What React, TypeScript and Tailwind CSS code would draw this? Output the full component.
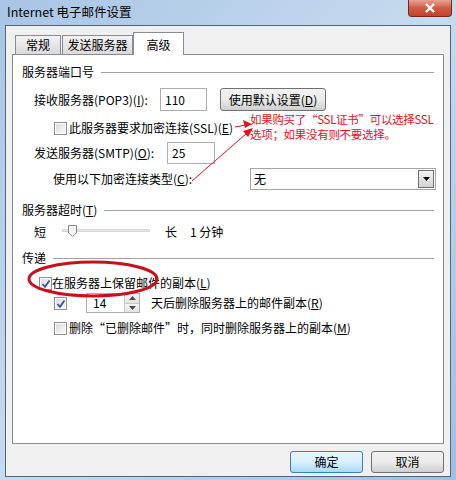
import React from 'react';

const font = { fontFamily: '"Segoe UI", "Noto Sans CJK SC", "Noto Sans", sans-serif' };

function CheckBox({ checked = false }: { checked?: boolean }) {
  return (
    <span className="relative inline-flex h-[13px] w-[13px] shrink-0 items-center justify-center border border-[#8f8f8f] bg-white">
      <span className="h-[9px] w-[9px] bg-gradient-to-br from-[#dcdcdc] to-[#fafafa]" />
      {checked && (
        <svg className="absolute left-[1px] top-[1px]" width="10" height="10" viewBox="0 0 10 10">
          <path d="M1.5 5 L4 7.8 L8.5 1.5" fill="none" stroke="#3b4ea8" strokeWidth="1.8" />
        </svg>
      )}
    </span>
  );
}

function SectionHeader({ label }: { label: React.ReactNode }) {
  return (
    <div className="flex h-[18px] items-center gap-[7px] pr-[9px]">
      <span className="whitespace-nowrap">{label}</span>
      <div className="h-px flex-1 bg-[#a0a0a0]" />
    </div>
  );
}

function Tab({ label, active = false }: { label: string; active?: boolean }) {
  return active ? (
    <div className="relative z-10 -mb-px flex h-[23px] items-start justify-center whitespace-nowrap border border-b-0 border-[#898c95] bg-white pt-[3px]">
      {label}
    </div>
  ) : (
    <div className="flex h-[19px] items-center justify-center whitespace-nowrap border border-b-0 border-[#898c95] bg-gradient-to-b from-[#f3f3f3] to-[#dadada]">
      {label}
    </div>
  );
}

export default function App() {
  return (
    <div
      className="relative flex h-[480px] w-[456px] flex-col overflow-hidden bg-gradient-to-br from-[#a9c5e4] via-[#c6dbef] to-[#9ec0e2] text-[12px] text-black"
      style={font}
    >
      {/* Title bar */}
      <div className="flex h-[25px] shrink-0 items-start justify-between pl-[7px]">
        <span className="pt-[3px] text-[12.5px]">Internet 电子邮件设置</span>
        <div className="mr-[4px] flex h-[17px] w-[44px] items-center justify-center rounded-b-[4px] border border-t-0 border-[#6b2a22] bg-gradient-to-b from-[#e9a293] via-[#cf5a43] to-[#c4432c]">
          <svg width="12" height="10" viewBox="0 0 12 10">
            <path d="M2 1 L10 9 M10 1 L2 9" stroke="white" strokeWidth="2.4" />
          </svg>
        </div>
      </div>

      {/* Client */}
      <div className="mx-[5px] mb-[3px] flex flex-1 flex-col border border-[#4f6680] bg-[#f0f0f0] px-[6px] pb-[3px] pt-[6px]">
        {/* Tabs */}
        <div className="flex items-end pl-[3px]">
          <div className="flex items-end gap-[1px]">
            <div className="w-[46px]"><Tab label="常规" /></div>
            <div className="w-[71px]"><Tab label="发送服务器" /></div>
          </div>
          <div className="w-[51px]"><Tab label="高级" active /></div>
        </div>

        {/* Panel */}
        <div className="flex h-[390px] flex-col border border-[#898c95] bg-white pl-[9px] pt-[8px]">
          <SectionHeader label="服务器端口号" />

          <div className="mt-[7px] flex h-[23px] items-center">
            <span className="w-[138px] pl-[12px]">
              接收服务器(POP3)(<u>I</u>):
            </span>
            <div className="flex h-[23px] w-[47px] items-center border border-[#abadb3] pl-[4px]">110</div>
            <button className="ml-[13px] flex h-[23px] w-[106px] items-center justify-center rounded-[3px] border border-[#707070] bg-gradient-to-b from-[#f2f2f2] via-[#ebebeb] to-[#cfcfcf]">
              使用默认设置(<u>D</u>)
            </button>
          </div>

          <div className="mt-[9px] flex h-[16px] items-center gap-[2px] pl-[32px]">
            <CheckBox />
            <span>此服务器要求加密连接(SSL)(<u>E</u>)</span>
          </div>

          <div className="mt-[6px] flex h-[22px] items-center">
            <span className="w-[145px] pl-[12px]">
              发送服务器(SMTP)(<u>O</u>):
            </span>
            <div className="flex h-[22px] w-[48px] items-center border border-[#abadb3] pl-[4px]">25</div>
          </div>

          <div className="mt-[4px] flex h-[22px] items-center">
            <span className="w-[228px] pl-[31px]">
              使用以下加密连接类型(<u>C</u>):
            </span>
            <div className="flex h-[22px] w-[186px] items-center justify-between border border-[#a5a5a5] pl-[3px] pr-[1px]">
              <span>无</span>
              <div className="flex h-[18px] w-[16px] items-center justify-center border border-[#707070] bg-gradient-to-b from-[#f2f2f2] to-[#d4d4d4]">
                <svg width="7" height="4" viewBox="0 0 7 4">
                  <path d="M0 0 H7 L3.5 4 Z" fill="#000" />
                </svg>
              </div>
            </div>
          </div>

          <div className="mt-[11px]">
            <SectionHeader label={<>服务器超时(<u>T</u>)</>} />
          </div>

          <div className="mt-[4px] flex h-[18px] items-center">
            <span className="w-[40px] pl-[12px]">短</span>
            <div className="relative h-[18px] w-[88px]">
              <div className="absolute left-0 right-0 top-[6px] h-[3px] border border-[#d6d6d6] bg-[#e7e7e7]" />
              <svg className="absolute left-[6px] top-[2px]" width="9" height="12" viewBox="0 0 9 12">
                <path d="M0.5 0.5 H8.5 V8 L4.5 11.5 L0.5 8 Z" fill="#f4f4f4" stroke="#8a8a8a" />
              </svg>
            </div>
            <span className="ml-[15px]">长</span>
            <span className="ml-[13px]">1 分钟</span>
          </div>

          <div className="mt-[8px]">
            <SectionHeader label="传递" />
          </div>

          <div className="mt-[7px] flex h-[18px] items-center pl-[17px]">
            <CheckBox checked />
            <span>在服务器上保留邮件的副本(<u>L</u>)</span>
          </div>

          <div className="mt-[1px] flex h-[20px] items-center pl-[32px]">
            <CheckBox checked />
            <div className="ml-[19px] flex h-[20px] w-[54px] items-center justify-between border border-[#abadb3] pl-[6px]">
              <span>14</span>
              <div className="flex h-[18px] w-[15px] flex-col border-l border-[#c8c8c8]">
                <div className="flex flex-1 items-center justify-center bg-gradient-to-b from-[#f7f7f7] to-[#e2e2e2]">
                  <svg width="7" height="4" viewBox="0 0 7 4"><path d="M0 4 H7 L3.5 0 Z" fill="#4a4a4a" /></svg>
                </div>
                <div className="flex flex-1 items-center justify-center border-t border-[#c8c8c8] bg-gradient-to-b from-[#f7f7f7] to-[#e2e2e2]">
                  <svg width="7" height="4" viewBox="0 0 7 4"><path d="M0 0 H7 L3.5 4 Z" fill="#4a4a4a" /></svg>
                </div>
              </div>
            </div>
            <span className="ml-[11px]">天后删除服务器上的邮件副本(<u>R</u>)</span>
          </div>

          <div className="mt-[6px] flex h-[18px] items-center gap-[2px] pl-[32px]">
            <CheckBox />
            <span>删除“已删除邮件”时，同时删除服务器上的副本(<u>M</u>)</span>
          </div>
        </div>

        {/* Buttons */}
        <div className="mt-[7px] flex justify-end gap-[8px]">
          <button className="flex h-[22px] w-[73px] items-center justify-center rounded-[3px] border border-[#3c7fb1] bg-gradient-to-b from-[#eaf6fd] via-[#d9f0fc] to-[#a7d9f5]">
            确定
          </button>
          <button className="flex h-[22px] w-[73px] items-center justify-center rounded-[3px] border border-[#707070] bg-gradient-to-b from-[#f2f2f2] via-[#ebebeb] to-[#cfcfcf]">
            取消
          </button>
        </div>
      </div>

      {/* Red annotation overlay */}
      <div className="absolute left-[250px] top-[112px] whitespace-nowrap text-[11.5px] leading-[15px] tracking-[-0.3px] text-[#e8101c]">
        <div>如果购买了“SSL证书”可以选择SSL</div>
        <div>选项；如果没有则不要选择。</div>
      </div>
      <svg className="pointer-events-none absolute left-0 top-0" width="456" height="480">
        <ellipse cx="93" cy="279" rx="64" ry="17" fill="none" stroke="#c8101c" strokeWidth="3" />
        <line x1="235" y1="127" x2="246" y2="125" stroke="#e8101c" strokeWidth="1" />
        <path d="M252 124 L243 120 L245 128 Z" fill="#e8101c" />
        <line x1="192" y1="181" x2="247" y2="133" stroke="#e8101c" strokeWidth="1" />
        <path d="M253 128 L243 131 L248 137 Z" fill="#e8101c" />
      </svg>
    </div>
  );
}
